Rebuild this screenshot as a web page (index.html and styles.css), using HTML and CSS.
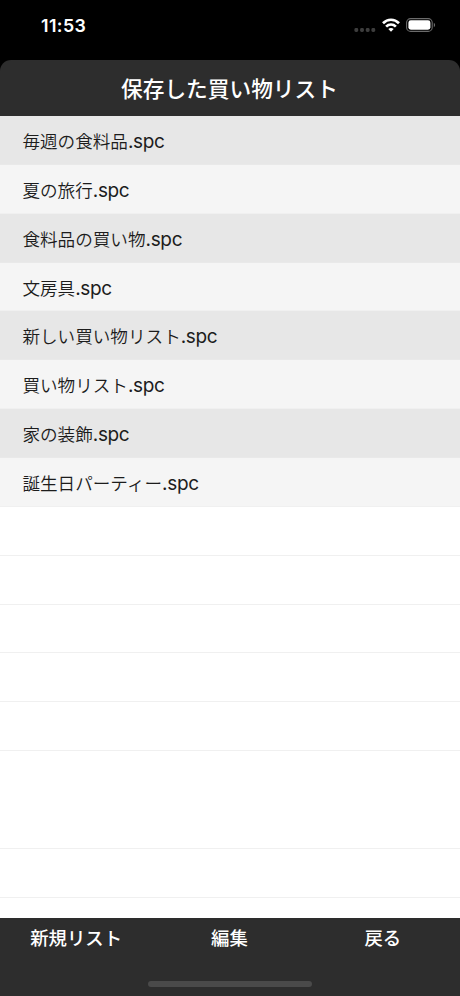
FILE: index.html
```html
<!DOCTYPE html>
<html lang="ja">
<head>
    <meta charset="UTF-8">
    <meta name="viewport" content="width=device-width, initial-scale=1.0">
    <title>保存した買い物リスト</title>
    <link rel="stylesheet" href="styles.css">
</head>
<body>
    <div class="screen">
        <div class="status-bar">
            <span class="time">11:53</span>
            <div class="status-icons">
                <svg class="signal" width="22" height="4" viewBox="0 0 22 4" fill="#3d3d3d">
                    <rect x="0.4" y="0" width="3.8" height="4" rx="1.4"/>
                    <rect x="6.1" y="0" width="3.8" height="4" rx="1.4"/>
                    <rect x="11.8" y="0" width="3.8" height="4" rx="1.4"/>
                    <rect x="17.4" y="0" width="3.8" height="4" rx="1.4"/>
                </svg>
                <svg class="wifi" width="18" height="14" viewBox="0 0 18 14" fill="none" stroke="#fff" stroke-width="2.7">
                    <path d="M1 5.2C5.6 0.6 12.4 0.6 17 5.2"/>
                    <path d="M4.1 8.6C6.9 5.8 11.1 5.8 13.9 8.6"/>
                    <path d="M9 13.8L6.3 11.1C7.9 9.7 10.1 9.7 11.7 11.1Z" fill="#fff" stroke="none"/>
                </svg>
                <svg class="battery" width="30" height="14" viewBox="0 0 30 14">
                    <rect x="0.6" y="0.6" width="25.6" height="12.8" rx="4" fill="none" stroke="#6b6b6b" stroke-width="1.1"/>
                    <rect x="2.4" y="2.3" width="22" height="9.4" rx="2.4" fill="#fff"/>
                    <path d="M27.8 4.8C29.6 5.5 29.6 8.5 27.8 9.2Z" fill="#6b6b6b"/>
                </svg>
            </div>
        </div>

        <header class="header">
            <h1>保存した買い物リスト</h1>
        </header>

        <ul class="list">
            <li class="file"><span class="name">毎週の食料品</span>.spc</li>
            <li class="file"><span class="name">夏の旅行</span>.spc</li>
            <li class="file"><span class="name">食料品の買い物</span>.spc</li>
            <li class="file"><span class="name">文房具</span>.spc</li>
            <li class="file"><span class="name">新しい買い物リスト</span>.spc</li>
            <li class="file"><span class="name">買い物リスト</span>.spc</li>
            <li class="file"><span class="name">家の装飾</span>.spc</li>
            <li class="file"><span class="name">誕生日パーティー</span>.spc</li>
            <li></li>
            <li></li>
            <li></li>
            <li></li>
            <li></li>
            <li class="double"></li>
            <li></li>
        </ul>

        <footer class="toolbar">
            <div class="buttons">
                <button class="button">新規リスト</button>
                <button class="button">編集</button>
                <button class="button">戻る</button>
            </div>
            <div class="home-indicator"></div>
        </footer>
    </div>
</body>
</html>
```
FILE: styles.css
```css
* {
    box-sizing: border-box;
}

body {
    margin: 0;
    background-color: #000;
    font-family: Inter, "Noto Sans CJK JP", sans-serif;
}

.screen {
    display: flex;
    flex-direction: column;
    height: 996px;
    overflow: hidden;
}

.status-bar {
    display: flex;
    justify-content: space-between;
    flex: none;
    height: 60px;
    padding: 14px 24px 0 41px;
    color: #fff;
}

.time {
    font-size: 17.8px;
    font-weight: 600;
    line-height: 24px;
    letter-spacing: 0.4px;
}

.status-icons {
    display: flex;
    align-items: center;
    height: 22px;
}

.signal {
    margin: 10px 6px 0 0;
}

.wifi {
    margin-right: 6px;
}

.header {
    flex: none;
    height: 56px;
    background-color: #2d2d2d;
    border-radius: 11px 11px 0 0;
    color: #fff;
    text-align: center;
}

.header h1 {
    margin: 0;
    padding-right: 1px;
    font-family: "Noto Sans CJK JP", sans-serif;
    font-size: 21.7px;
    font-weight: 500;
    line-height: 55px;
}

.list {
    flex: 1;
    min-height: 0;
    margin: 0;
    padding: 0;
    overflow: hidden;
    background-color: #fff;
    list-style: none;
}

.list li {
    height: 48.87px;
    padding-left: 22.4px;
    border-bottom: 1px solid #f0f0f0;
    color: #1c1c1c;
    font-size: 19px;
    letter-spacing: -0.35px;
    line-height: 49px;
    white-space: nowrap;
}

.list .double {
    height: 97.74px;
}

.list .file {
    background-color: #f5f5f5;
}

.list .file:nth-child(odd) {
    background-color: #e7e7e7;
    border-bottom-color: #e9e9e9;
}

.name {
    font-family: "Noto Sans CJK JP", sans-serif;
    font-size: 17.6px;
    font-weight: 350;
    letter-spacing: 0;
}

.toolbar {
    flex: none;
    height: 78px;
    background-color: #2d2d2d;
}

.buttons {
    display: grid;
    grid-template-columns: repeat(3, 1fr);
    height: 63px;
}

.button {
    height: 38px;
    padding: 0 1px 0 0;
    border: none;
    background: none;
    color: #fff;
    font-family: "Noto Sans CJK JP", sans-serif;
    font-size: 18.4px;
    font-weight: 500;
    line-height: 38px;
}

.home-indicator {
    width: 164px;
    height: 6px;
    margin: 0 auto;
    border-radius: 3px;
    background-color: #4a4a4a;
}
```
